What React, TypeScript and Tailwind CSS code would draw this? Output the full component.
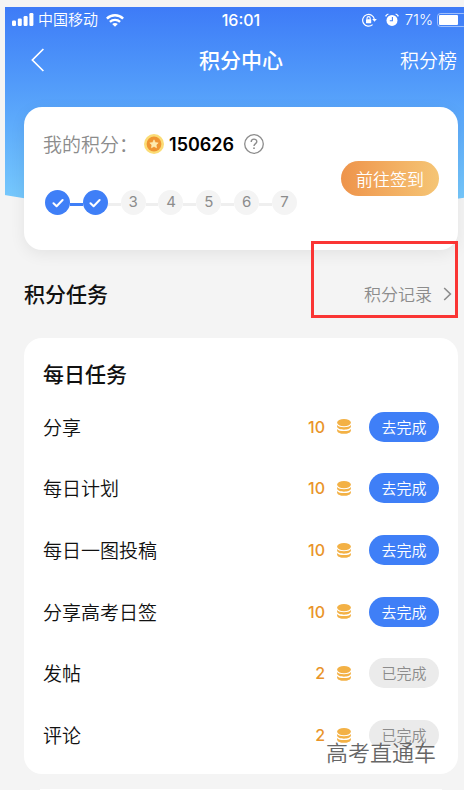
import clsx from 'clsx'

const tasks = [
  { name: '分享', points: 10, done: false },
  { name: '每日计划', points: 10, done: false },
  { name: '每日一图投稿', points: 10, done: false },
  { name: '分享高考日签', points: 10, done: false },
  { name: '发帖', points: 2, done: true },
  { name: '评论', points: 2, done: true },
]

const days = [1, 2, 3, 4, 5, 6, 7]
const signedDays = 2

function SignalIcon() {
  return (
    <svg width="22" height="14" viewBox="0 0 22 14" fill="currentColor" aria-hidden="true">
      <rect x="0" y="7.5" width="4" height="5.5" rx="1.2" />
      <rect x="5.8" y="5.5" width="4" height="7.5" rx="1.2" />
      <rect x="11.6" y="3" width="4" height="10" rx="1.2" />
      <rect x="17.4" y="0" width="4" height="13" rx="1.2" />
    </svg>
  )
}

function WifiIcon() {
  return (
    <svg width="18" height="13" viewBox="0 0 18 13" fill="none" stroke="currentColor" aria-hidden="true">
      <path d="M0.9 4.6 C5.3 0.2 12.7 0.2 17.1 4.6" strokeWidth="2.5" />
      <path d="M3.9 7.8 C6.8 5.1 11.2 5.1 14.1 7.8" strokeWidth="2.3" />
      <path d="M9 12.8 L6.2 10 C7.8 8.6 10.2 8.6 11.8 10 Z" fill="currentColor" stroke="none" />
    </svg>
  )
}

function RotationLockIcon() {
  return (
    <svg width="15" height="14" viewBox="0 0 15 14" fill="none" stroke="currentColor" aria-hidden="true">
      <path d="M10.6 11.6 A5.9 5.9 0 1 1 12.4 6.4" strokeWidth="1.2" />
      <path d="M10.2 6 H14.8 L12.5 8.8 Z" fill="currentColor" stroke="none" />
      <rect x="4" y="6.2" width="5.2" height="4" rx="0.5" fill="currentColor" stroke="none" />
      <path d="M5 6.5 V5.2 A1.6 1.6 0 0 1 8.2 5.2 V6.5" strokeWidth="1.1" />
    </svg>
  )
}

function AlarmIcon() {
  return (
    <svg width="14" height="14" viewBox="0 0 14 14" fill="none" aria-hidden="true">
      <circle cx="7" cy="7.4" r="5.5" fill="currentColor" />
      <path d="M0.6 3.4 C1.2 2.2 2 1.5 3.4 1 M13.4 3.4 C12.8 2.2 12 1.5 10.6 1" stroke="currentColor" strokeWidth="1.3" />
      <path d="M7.4 4 V7.8 H4.8" stroke="#4480f7" strokeWidth="1.1" />
    </svg>
  )
}

function BatteryIcon() {
  return (
    <svg width="33" height="14" viewBox="0 0 33 14" fill="none" aria-hidden="true">
      <rect x="0.5" y="0.5" width="29" height="13" rx="3" stroke="currentColor" strokeOpacity="0.5" />
      <rect x="2" y="2" width="19" height="10" rx="1" fill="currentColor" />
      <path d="M31 4.5 C32.6 5.2 32.6 8.8 31 9.5 Z" fill="currentColor" fillOpacity="0.5" />
    </svg>
  )
}

function MedalIcon() {
  return (
    <svg width="20" height="20" viewBox="0 0 20 20" aria-hidden="true">
      <circle cx="10" cy="10" r="10" fill="#fbdc76" />
      <circle cx="10" cy="10" r="7.4" fill="#ef9532" />
      <path
        d="M10 5.8 L11.3 8.5 L14.2 8.9 L12.1 10.9 L12.6 13.8 L10 12.4 L7.4 13.8 L7.9 10.9 L5.8 8.9 L8.7 8.5 Z"
        fill="#fdebb0"
        stroke="#fdebb0"
        strokeWidth="0.6"
        strokeLinejoin="round"
      />
    </svg>
  )
}

function HelpIcon() {
  return (
    <svg width="20" height="20" viewBox="0 0 20 20" fill="none" stroke="#8c8c8c" aria-hidden="true">
      <circle cx="10" cy="10" r="9.3" strokeWidth="1.3" />
      <path d="M7.2 7.9 C7.2 4.3 12.8 4.3 12.8 7.7 C12.8 9.6 10 9.7 10 12" strokeWidth="1.4" />
      <circle cx="10" cy="14.2" r="0.9" fill="#8c8c8c" stroke="none" />
    </svg>
  )
}

function CoinsIcon() {
  return (
    <svg width="14" height="15" viewBox="0 0 14 15" fill="#f3b145" aria-hidden="true">
      <ellipse cx="7" cy="3.6" rx="6.9" ry="3.6" />
      <path d="M0.1 6 C2 9 12 9 13.9 6 V7.8 C12.8 11.6 1.2 11.6 0.1 7.8 Z" />
      <path d="M0.1 9.9 C2 12.8 12 12.8 13.9 9.9 V11.7 C12.8 15.9 1.2 15.9 0.1 11.7 Z" />
    </svg>
  )
}

function Header() {
  return (
    <header className="h-[207px] w-[calc(100%+16px)] bg-linear-to-b from-[#3e7bf7] to-[#7bcefc] text-white [clip-path:ellipse(120%_100%_at_50%_0)]">
      <div className="grid h-[26px] grid-cols-[1fr_auto_1fr] items-center pr-2.5 pl-[7px] font-[Inter,'Noto_Sans_CJK_SC',sans-serif] text-[15px]">
        <div className="flex items-center">
          <SignalIcon />
          <span className="mr-2 ml-1 font-[350]">中国移动</span>
          <WifiIcon />
        </div>
        <span className="text-base font-medium">16:01</span>
        <div className="flex items-center justify-end">
          <RotationLockIcon />
          <span className="mr-1.5 ml-2">
            <AlarmIcon />
          </span>
          <span className="mr-1">71%</span>
          <BatteryIcon />
        </div>
      </div>
      <nav className="grid h-[54px] grid-cols-[1fr_auto_1fr] items-center pr-[23px] pl-5">
        <button type="button" aria-label="返回" className="justify-self-start px-1.5">
          <svg width="14" height="24" viewBox="0 0 14 24" fill="none" stroke="currentColor" strokeWidth="1.7" aria-hidden="true">
            <path d="M12.4 1 L1.4 12 L12.4 23" />
          </svg>
        </button>
        <h1 className="text-[21px] font-medium">积分中心</h1>
        <a href="#rank" className="justify-self-end text-[19px]">
          积分榜
        </a>
      </nav>
    </header>
  )
}

function SignInSteps() {
  return (
    <ol className="ml-[2px] flex w-[252px] items-center font-[Inter,sans-serif] text-[15px] font-normal text-[#8c8c8c]">
      {days.map((day) => (
        <li key={day} className={clsx('flex items-center', day > 1 && 'flex-1')}>
          {day > 1 && (
            <span className={clsx('mt-1 h-[3px] flex-1', day <= signedDays ? 'bg-[#3f7ff7]' : 'bg-[#efefef]')} />
          )}
          <span
            className={clsx(
              'flex size-[25px] items-center justify-center rounded-full',
              day <= signedDays ? 'bg-[#3f7ff7]' : 'bg-[#f4f4f4]'
            )}
          >
            {day <= signedDays ? (
              <svg width="12" height="10" viewBox="0 0 12 10" fill="none" stroke="white" strokeWidth="2" strokeLinecap="round" strokeLinejoin="round" aria-hidden="true">
                <path d="M1.5 5.2 L4.6 8.2 L10.6 2" />
              </svg>
            ) : (
              day
            )}
          </span>
        </li>
      ))}
    </ol>
  )
}

function PointsCard() {
  return (
    <section className="flex items-center justify-between rounded-[18px] bg-white px-[19px] shadow-[0_4px_16px_rgba(0,0,0,0.07)]">
      <div className="pt-[25px] pb-[35px]">
        <div className="mb-[34px] flex h-6 items-center">
          <span className="text-[19px] text-[#8c8c8c]">我的积分：</span>
          <span className="ml-1.5">
            <MedalIcon />
          </span>
          <strong className="mr-2.5 ml-[5px] font-[Inter,sans-serif] text-[18px] font-semibold text-black">150626</strong>
          <button type="button" aria-label="积分说明">
            <HelpIcon />
          </button>
        </div>
        <SignInSteps />
      </div>
      <button
        type="button"
        className="h-[35px] w-[98px] rounded-full bg-linear-to-r from-[#ee944b] to-[#f5c575] text-[17px] text-white"
      >
        前往签到
      </button>
    </section>
  )
}

function TaskList() {
  return (
    <section className="rounded-[18px] bg-white px-[19px] pt-5 pb-2">
      <h3 className="mb-2 text-[21px] leading-[30px] font-medium">每日任务</h3>
      <ul className="grid h-[370px] grid-rows-6">
        {tasks.map((task) => (
          <li key={task.name} className="flex items-center">
            <span className="flex-1 text-[19px]">{task.name}</span>
            <span className="mr-3 font-[Inter,sans-serif] text-base font-medium text-[#e99429]">{task.points}</span>
            <CoinsIcon />
            <button
              type="button"
              disabled={task.done}
              className={clsx(
                'ml-[18px] h-[30px] w-[70px] rounded-full text-[15px]',
                task.done ? 'bg-[#ebebeb] text-[#8c8c8c]' : 'bg-[#3f7ff7] text-white'
              )}
            >
              {task.done ? '已完成' : '去完成'}
            </button>
          </li>
        ))}
      </ul>
    </section>
  )
}

export default function App() {
  return (
    <div className="relative min-h-screen overflow-hidden bg-[#f4f4f4] pt-[7px] pl-[5px] font-['Noto_Sans_CJK_SC',sans-serif] font-[350] text-[#111]">
      <Header />
      <main className="relative -mt-[107px] pr-[6px] pl-[19px]">
        <PointsCard />
        <div className="relative flex h-[88px] items-center justify-between pr-[6px]">
          <h2 className="text-[21px] font-medium">积分任务</h2>
          <a href="#records" className="flex items-center gap-[11px] text-[17px] text-[#8c8c8c]">
            积分记录
            <svg width="9" height="14" viewBox="0 0 9 14" fill="none" stroke="currentColor" strokeWidth="1.6" aria-hidden="true">
              <path d="M1.2 1 L7.4 7 L1.2 13" />
            </svg>
          </a>
          <div className="pointer-events-none absolute -top-[9px] right-0 h-[77px] w-[147px] border-3 border-[#fa3534]" />
        </div>
        <TaskList />
        <div className="mx-4 mt-[15px] h-px bg-white" />
        <span className="absolute right-7 bottom-6 text-[22px] leading-[30px] text-[#666] [text-shadow:1px_1px_0_#fff]">
          高考直通车
        </span>
      </main>
    </div>
  )
}
